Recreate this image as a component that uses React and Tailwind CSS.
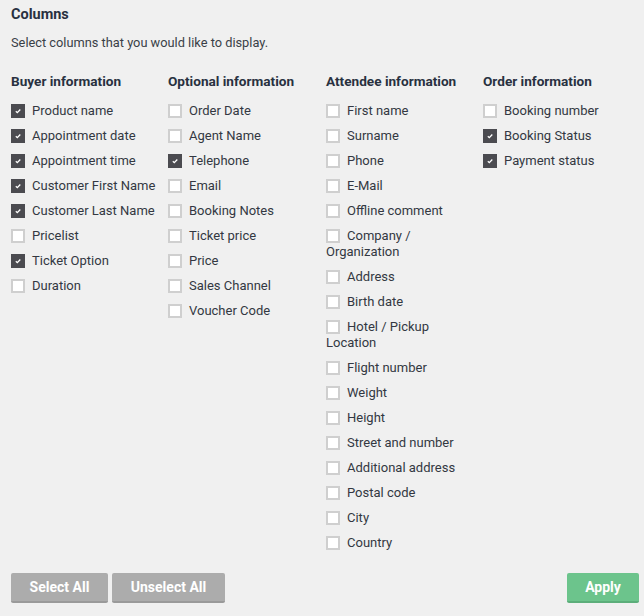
import { useState } from 'react'

const GROUPS = [
  {
    title: 'Buyer information',
    items: [
      ['Product name', true],
      ['Appointment date', true],
      ['Appointment time', true],
      ['Customer First Name', true],
      ['Customer Last Name', true],
      ['Pricelist', false],
      ['Ticket Option', true],
      ['Duration', false],
    ],
  },
  {
    title: 'Optional information',
    items: [
      ['Order Date', false],
      ['Agent Name', false],
      ['Telephone', true],
      ['Email', false],
      ['Booking Notes', false],
      ['Ticket price', false],
      ['Price', false],
      ['Sales Channel', false],
      ['Voucher Code', false],
    ],
  },
  {
    title: 'Attendee information',
    items: [
      ['First name', false],
      ['Surname', false],
      ['Phone', false],
      ['E-Mail', false],
      ['Offline comment', false],
      ['Company / Organization', false],
      ['Address', false],
      ['Birth date', false],
      ['Hotel / Pickup Location', false],
      ['Flight number', false],
      ['Weight', false],
      ['Height', false],
      ['Street and number', false],
      ['Additional address', false],
      ['Postal code', false],
      ['City', false],
      ['Country', false],
    ],
  },
  {
    title: 'Order information',
    items: [
      ['Booking number', false],
      ['Booking Status', true],
      ['Payment status', true],
    ],
  },
]

function Box({ checked }) {
  if (checked) {
    return (
      <span className="relative top-[1px] inline-block w-[14px] h-[14px] bg-[#4b4b50] align-top mr-[7px]">
        <svg className="absolute left-[3px] top-[3px]" width="8" height="8" viewBox="0 0 8 8">
          <path d="M1.8 4.3 L3.3 5.7 L6.3 2.5" fill="none" stroke="#fff" strokeWidth="1.3" />
        </svg>
      </span>
    )
  }
  return <span className="relative top-[1px] inline-block w-[14px] h-[14px] bg-white border-2 border-[#cfcfcf] align-top mr-[7px]" />
}

export default function App() {
  const [groups, setGroups] = useState(GROUPS)

  function toggle(g, i) {
    setGroups(groups.map((grp, gi) =>
      gi !== g ? grp : { ...grp, items: grp.items.map((it, ii) => (ii === i ? [it[0], !it[1]] : it)) }
    ))
  }

  function setAll(v) {
    setGroups(groups.map(grp => ({ ...grp, items: grp.items.map(it => [it[0], v]) })))
  }

  return (
    <div className="w-[644px] h-[616px] bg-[#f0f0f0] text-[#333842] font-['Roboto',sans-serif] px-[11px] pt-[6px]">
      <h1 className="text-[14.5px] font-bold text-[#283140] leading-[18px]">Columns</h1>
      <p className="text-[12.8px] text-[#3a3f47] mt-[11px] leading-[16px]">Select columns that you would like to display.</p>

      <div className="grid grid-cols-[157px_158px_157px_1fr] mt-[21px] h-[501px]">
        {groups.map((grp, g) => (
          <div key={grp.title} className="pr-[8px]">
            <h2 className="text-[13.6px] font-bold text-[#283140] leading-[18px] mb-[13px]">{grp.title}</h2>
            {grp.items.map(([label, checked], i) => (
              <label
                key={label}
                onClick={() => toggle(g, i)}
                className={`block text-[13px] leading-[16px] mb-[9px] cursor-pointer ${
                  label.includes('/') ? 'pr-[7px]' : ''
                }`}
              >
                <Box checked={checked} />
                {label}
              </label>
            ))}
          </div>
        ))}
      </div>

      <div className="flex items-center">
        <button
          onClick={() => setAll(true)}
          className="h-[30px] w-[97px] bg-[#acacac] text-white text-[14px] font-bold rounded-[2px] border-b-2 border-[#9a9a9a]"
        >
          Select All
        </button>
        <button
          onClick={() => setAll(false)}
          className="h-[30px] w-[113px] ml-[4px] bg-[#acacac] text-white text-[14px] font-bold rounded-[2px] border-b-2 border-[#9a9a9a]"
        >
          Unselect All
        </button>
        <button className="ml-auto mr-[-6px] h-[30px] w-[72px] bg-[#6cc48c] text-white text-[14px] font-bold rounded-[2px] border-b-2 border-[#5cae7a]">
          Apply
        </button>
      </div>
    </div>
  )
}
